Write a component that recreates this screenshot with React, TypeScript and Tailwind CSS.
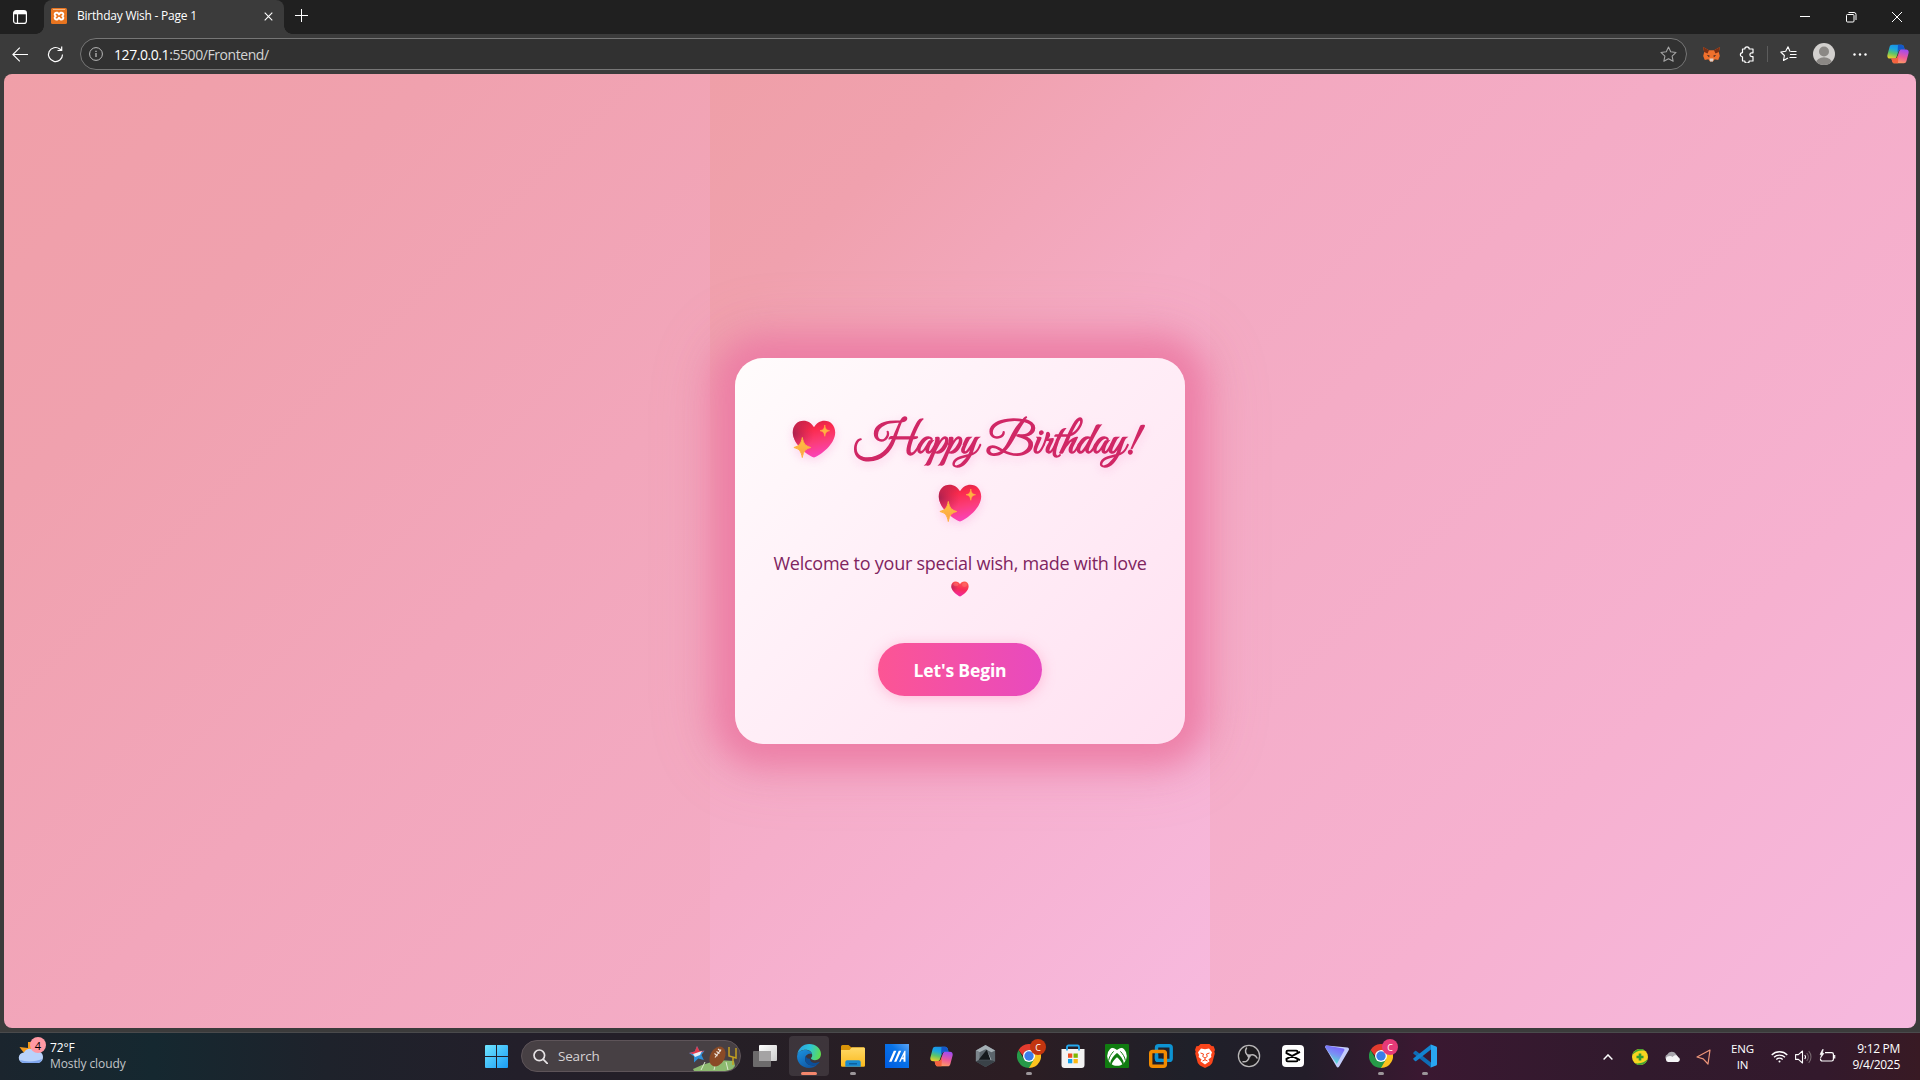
import React from 'react';

type IconProps = { className?: string };

function SparkHeart({ className = '' }: IconProps) {
  return (
    <svg viewBox="0 0 44 38" className={className}>
      <defs>
        <linearGradient id="sh" x1="0.3" y1="0" x2="0.55" y2="1">
          <stop offset="0" stopColor="#d32448" />
          <stop offset="0.25" stopColor="#fb2a4c" />
          <stop offset="0.6" stopColor="#fb3c78" />
          <stop offset="1" stopColor="#fb42bd" />
        </linearGradient>
        <radialGradient id="shl" cx="0" cy="0.35" r="0.5">
          <stop offset="0" stopColor="#9a1f50" stopOpacity="0.85" />
          <stop offset="1" stopColor="#c32450" stopOpacity="0" />
        </radialGradient>
        <linearGradient id="shs" x1="0" y1="0" x2="0" y2="1">
          <stop offset="0" stopColor="#ffc93c" />
          <stop offset="1" stopColor="#fb9d4b" />
        </linearGradient>
      </defs>
      <path d="M22 37.5C15 35 .8 24 .8 12.500C.8 5.500 5.500 .8 11.500 .8c4.500 0 8.500 2.700 10.500 6.500C24 3.500 28 .8 32.500 .8c6 0 10.700 4.700 10.700 11.700C43.200 24 29 35 22 37.500Z" fill="url(#sh)" />
      <path d="M22 37.5C15 35 .8 24 .8 12.500C.8 5.500 5.500 .8 11.500 .8c4.500 0 8.500 2.700 10.500 6.500C24 3.500 28 .8 32.500 .8c6 0 10.700 4.700 10.700 11.700C43.200 24 29 35 22 37.500Z" fill="url(#shl)" />
      <path d="M10.300 17.500c1.300 6.200 2.600 8.300 8.400 10-5.800 1.600-7.100 3.700-8.400 10-1.300-6.300-2.600-8.400-8.400-10 5.800-1.700 7.100-3.800 8.400-10Z" fill="url(#shs)" stroke="#ffb340" strokeWidth="1" strokeLinejoin="round" />
      <path d="M32.800 5c.6 4 1.500 5 4.800 5.700-3.300.8-4.200 1.800-4.800 5.600-.6-3.800-1.500-4.800-4.800-5.600 3.300-.7 4.200-1.700 4.800-5.700Z" fill="#ffb340" stroke="#ffb340" strokeWidth=".6" strokeLinejoin="round" />
    </svg>
  );
}

function SmallHeart() {
  return (
    <svg viewBox="0 0 44 38" className="h-4 w-[18px]">
      <defs>
        <linearGradient id="smh" x1="0.6" y1="0" x2="0.4" y2="1">
          <stop offset="0" stopColor="#ff5a4e" />
          <stop offset="0.5" stopColor="#f82c58" />
          <stop offset="1" stopColor="#f02aa8" />
        </linearGradient>
        <radialGradient id="smd" cx="0" cy="0.4" r="0.4">
          <stop offset="0" stopColor="#a32560" stopOpacity="0.8" />
          <stop offset="1" stopColor="#c32450" stopOpacity="0" />
        </radialGradient>
      </defs>
      <path d="M22 37.500C15 35 .8 24 .8 12.500C.8 5.500 5.500 .8 11.500 .8c4.500 0 8.500 2.700 10.500 6.500C24 3.500 28 .8 32.500 .8c6 0 10.700 4.700 10.700 11.700C43.200 24 29 35 22 37.500Z" fill="url(#smh)" />
      <path d="M22 37.500C15 35 .8 24 .8 12.500C.8 5.500 5.500 .8 11.500 .8c4.500 0 8.500 2.700 10.500 6.500C24 3.500 28 .8 32.500 .8c6 0 10.700 4.700 10.700 11.700C43.200 24 29 35 22 37.500Z" fill="url(#smd)" />
      <ellipse cx="12" cy="8" rx="6" ry="4" fill="#ff8a80" opacity=".35" />
      <ellipse cx="33" cy="9" rx="6" ry="5" fill="#ff8a80" opacity=".35" />
    </svg>
  );
}

function Copilot({ className = '' }: IconProps) {
  return (
    <svg viewBox="0 0 24 22" className={className}>
      <defs>
        <linearGradient id="cpA" x1="0.6" y1="0" x2="0.3" y2="1">
          <stop offset="0" stopColor="#1a8fe8" />
          <stop offset="0.35" stopColor="#1ca7e0" />
          <stop offset="0.65" stopColor="#5cc46a" />
          <stop offset="1" stopColor="#e8d02a" />
        </linearGradient>
        <linearGradient id="cpB" x1="0.6" y1="0" x2="0.3" y2="1">
          <stop offset="0" stopColor="#a24bf0" />
          <stop offset="0.5" stopColor="#ec5a9a" />
          <stop offset="1" stopColor="#ffa35c" />
        </linearGradient>
      </defs>
      <path d="M5.500 .7h10.300c1.500 0 2.300 1 2.700 2.300l.9 3h-4.600c-1.300 0-2 .7-2.300 1.800l-2.200 6.400c-.4 1.200-1.200 1.800-2.500 1.800H3.200C.6 16-.2 14 .5 11.500L2.700 3.200C3.200 1.600 4 .7 5.500 .7Z" fill="url(#cpA)" />
      <path d="M12 .7h3.800c1.500 0 2.300 1 2.700 2.300l.9 3h-4.600c-1.300 0-2 .7-2.300 1.800L11.500 9.500Z" fill="#1457c9" />
      <path d="M18.500 21.300H8.200c-1.500 0-2.200-1-2.600-2.300l-.9-3h4c1.300 0 2.200-.7 2.600-1.800l2.200-6.400c.4-1.200 1.200-1.800 2.500-1.800h4.800c2.600 0 3.400 2 2.700 4.500l-2.200 8.300c-.5 1.600-1.300 2.500-2.800 2.500Z" fill="url(#cpB)" />
      <path d="M12 21.300H8.200c-1.500 0-2.200-1-2.600-2.300l-.9-3h4c1.300 0 2.200-.7 2.600-1.800l1.200-3.200Z" fill="#f4623e" />
    </svg>
  );
}

function Chrome({ letter, badge }: { letter: string; badge: string }) {
  return (
    <div className="relative">
      <svg viewBox="0 0 24 24" className="h-6 w-6">
        <path d="M12 12V6h10.400A12 12 0 0 1 12 24Z" fill="#fcc31e" />
        <path d="M1.600 6 6.800 15 12 12l5.200 3L12 24A12 12 0 0 1 1.600 6Z" fill="#269a48" />
        <path d="M1.600 6A12 12 0 0 1 22.400 6H12c-3 0-5 1.500-5.800 6Z" fill="#e33b2e" />
        <circle cx="12" cy="12" r="6" fill="#fff" />
        <circle cx="12" cy="12" r="4.700" fill="#3b7de9" />
      </svg>
      <div className={`absolute -top-[5px] left-[13px] flex h-4 w-4 items-center justify-center rounded-full text-[9px] leading-none text-white ${badge}`}>{letter}</div>
    </div>
  );
}

const glyphs: Record<string, React.ReactNode> = {
  start: (
    <svg viewBox="0 0 23 23" className="h-[23px] w-[23px]">
      <defs>
        <linearGradient id="win" x1="0" y1="0" x2="1" y2="1">
          <stop offset="0" stopColor="#6fe5ff" />
          <stop offset="1" stopColor="#1a9cf5" />
        </linearGradient>
      </defs>
      <path d="M1 0h10v11H0V1a1 1 0 0 1 1-1ZM12 0h10a1 1 0 0 1 1 1v10H12ZM0 12h11v11H1a1 1 0 0 1-1-1ZM12 12h11v10a1 1 0 0 1-1 1H12Z" fill="url(#win)" />
    </svg>
  ),
  taskview: (
    <svg viewBox="0 0 24 22" className="h-[22px] w-6">
      <defs>
        <linearGradient id="tv" x1="0" y1="0" x2="1" y2="1">
          <stop offset="0" stopColor="#fff" />
          <stop offset="1" stopColor="#ccc" />
        </linearGradient>
      </defs>
      <rect x="6" y="0" width="18" height="16" rx="1" fill="url(#tv)" />
      <rect x="0" y="6" width="18" height="16" rx="1" fill="#6d6b6c" />
      <path d="M6 6h12v10H6z" fill="#a5a3a4" />
    </svg>
  ),
  edge: (
    <svg viewBox="0 0 24 24" className="h-6 w-6">
      <defs>
        <linearGradient id="eg" x1="0" y1="0.3" x2="1" y2="0.5">
          <stop offset="0" stopColor="#2b9fe0" />
          <stop offset="0.5" stopColor="#2cc4d8" />
          <stop offset="1" stopColor="#5fdc50" />
        </linearGradient>
        <linearGradient id="eb" x1="0" y1="0" x2="0.6" y2="1">
          <stop offset="0" stopColor="#1b93e0" />
          <stop offset="1" stopColor="#0f58a6" />
        </linearGradient>
      </defs>
      <path d="M.2 11C1 4.500 6 0 12.200 0 19 0 24 4.600 24 10c0 3.800-2.800 6.200-6 6.200-2.400 0-4-.9-4-1.900 0-.7 1.200-1 1.200-3C15.200 8 12 5.800 8.800 5.800 4.700 5.800 1.200 8 .2 11Z" fill="url(#eg)" />
      <path d="M.1 12C.5 8 4 5.900 8.300 5.900c3.500 0 6.300 2 6.800 4.400-4-1.600-7 1.200-7 4.700 0 5 5.500 8 11.900 5.700C17.800 23 15 24 12 24 5 24-.4 18.500.1 12Z" fill="url(#eb)" />
      <path d="M8.900 11.800c-.6 1-.8 2-.8 3.200 0 5 5.500 8 11.900 5.700 1-.6 2-1.700 2.700-2.900-4 2-9.500 1.400-9.800-3.100-2 .3-3.900-.9-4-2.900Z" fill="#0c4f99" />
    </svg>
  ),
  explorer: (
    <svg viewBox="0 0 24 22" className="h-[22px] w-6">
      <defs>
        <linearGradient id="fo" x1="0" y1="0" x2="0" y2="1">
          <stop offset="0" stopColor="#ffd967" />
          <stop offset="1" stopColor="#fbb91d" />
        </linearGradient>
      </defs>
      <path d="M0 1.500A1.500 1.500 0 0 1 1.500 0h6l2.700 2.200H23V8H0Z" fill="#d99409" />
      <path d="M0 5h8.500l2.200-2.600H23a1 1 0 0 1 1 1V20.500a1.200 1.200 0 0 1-1.200 1.200H1.200A1.200 1.200 0 0 1 0 20.500Z" fill="url(#fo)" />
      <path d="M4.300 21.700V17a1.800 1.800 0 0 1 1.800-1.800h11.800a1.800 1.800 0 0 1 1.800 1.800v4.700Z" fill="#188ad1" />
      <path d="M8 18h8v1.500H8z" fill="#0d619e" />
    </svg>
  ),
  myasus: (
    <svg viewBox="0 0 24 24" className="h-6 w-6">
      <defs>
        <linearGradient id="ma" x1="0" y1="1" x2="1" y2="0">
          <stop offset="0" stopColor="#005be0" />
          <stop offset="0.6" stopColor="#0873e8" />
          <stop offset="1" stopColor="#5ba4f4" />
        </linearGradient>
      </defs>
      <path d="M0 0h24v24H0Z" fill="url(#ma)" />
      <path d="m4 17.800 4.800-11h2.600l-4.800 11ZM9 17.800l4.800-11h2.400l-4.800 11Z" fill="#fff" />
      <path d="m14 17.800 5.500-11h1v11h-2v-2.600h-1.800l-1 2.600ZM17.400 13.500h1.100v-2.400Z" fill="#fff" fillRule="evenodd" />
    </svg>
  ),
  copilot: <Copilot className="h-[21px] w-[23px]" />,
  armoury: (
    <svg viewBox="0 0 22 24" className="h-[22px] w-[21px]">
      <path d="M11 0 21.500 6v12L11 24 .5 18V6Z" fill="#5b646b" />
      <path d="M11 0 21.500 6l-4 2L11 4.500 4.500 8l-4-2Z" fill="#a5afb5" />
      <path d="M.5 6l4 2v8l-4 2Z" fill="#7b848b" />
      <path d="m12.500 5 4 11L3.500 16Z" fill="#15191d" />
      <path d="m12.500 5 5.500 12.500-1.500-1.500Z" fill="#b3bcc2" />
      <path d="M.5 18 11 24l10.500-6-4-1.500H3.500Z" fill="#3a4248" />
    </svg>
  ),
  chrome: <Chrome letter="C" badge="bg-[#c2350f]" />,
  store: (
    <svg viewBox="0 0 24 24" className="h-6 w-6">
      <path d="M.5 5h23v16a3 3 0 0 1-3 3h-17a3 3 0 0 1-3-3Z" fill="#f3f3f3" />
      <path d="M6 6.500V3a1.500 1.500 0 0 1 1.500-1.500h9A1.500 1.500 0 0 1 18 3v3.500" fill="none" stroke="#24a8ee" strokeWidth="1.800" />
      <path d="M7 9.500h4.300v4.300H7z" fill="#ef4f22" />
      <path d="M12.500 9.500h4.300v4.300h-4.300z" fill="#7db700" />
      <path d="M7 15h4.300v4.300H7z" fill="#0ea2ee" />
      <path d="M12.500 15h4.300v4.300h-4.300z" fill="#fdb811" />
    </svg>
  ),
  xbox: (
    <svg viewBox="0 0 24 24" className="h-6 w-6">
      <rect width="24" height="24" rx="1" fill="#107c10" />
      <circle cx="12" cy="12" r="9.800" fill="#fff" />
      <path d="M5.500 3.800C8 3.300 10.500 4.800 12 5.900c1.500-1.100 4-2.600 6.500-2.100C16.500 1.900 14 1.500 12 1.500s-4.500.4-6.500 2.300Z" fill="#107c10" />
      <path d="M12 9c-3.400 2.500-6.500 7-6.800 10.200C7 21 9.500 22 12 22s5-1 6.800-2.800C18.500 16 15.400 11.500 12 9Z" fill="#107c10" />
      <path d="M12 13.200c-2.300 1.900-4.300 4.300-5.300 7.100C8.200 21.300 10 21.800 12 21.800s3.800-.5 5.300-1.500c-1-2.800-3-5.200-5.300-7.100Z" fill="#fff" />
      <path d="M8.600 7.400C6.300 9.700 4.200 13 3.600 16.500M15.400 7.400c2.300 2.300 4.400 5.600 5 9.100" fill="none" stroke="#107c10" strokeWidth="1" />
    </svg>
  ),
  vmware: (
    <svg viewBox="0 0 24 24" className="h-6 w-6" fill="none" strokeWidth="3.400">
      <rect x="7.500" y="1.700" width="14.700" height="14.700" rx="2" stroke="#0d93d2" />
      <rect x="1.700" y="7.500" width="14.700" height="14.700" rx="2" stroke="#f38b00" />
      <path d="M7.500 11v3.400a2 2 0 0 0 2 2H13" stroke="#0d93d2" />
    </svg>
  ),
  brave: (
    <svg viewBox="0 0 20 24" className="h-6 w-5">
      <path d="m5.500 0h9l2 2 2.200.3L20 6l-.7 1.500.5 2-2.600 9.500-2.200 2.500L10 24l-5-2.500L2.800 19 .2 9.500l.5-2L0 6l1.300-3.700L3.500 2Z" fill="#f9451b" />
      <path d="m6 4.500 4 .8 4-.8 3 3.800-1 2.700.4 2-3 2.500 1.200 1.700L10 20.500l-4.600-3.300 1.200-1.700-3-2.500.4-2-1-2.700Z" fill="#fff" />
      <path d="m5.500 9 3 1-.8 2.500L10 14l2.300-1.500-.8-2.500 3-1M10 14v2M7.500 17l2.500-1.200 2.500 1.200" fill="none" stroke="#f9451b" strokeWidth="1" />
    </svg>
  ),
  obs: (
    <svg viewBox="0 0 24 24" className="h-6 w-6">
      <circle cx="12" cy="12" r="10.600" fill="#1d1b1e" stroke="#b9b7b8" strokeWidth="1.300" />
      <g fill="none" stroke="#b9b7b8" strokeWidth="1.500" strokeLinecap="round">
        <path d="M12 12C8.500 10.500 7.500 7 9.500 4" />
        <path d="M12 12c3.200-2.200 6.800-1 8 2" />
        <path d="M12 12c.3 3.800-2.400 6.200-6 5.800" />
      </g>
      <circle cx="12" cy="12" r="1.800" fill="#b9b7b8" />
    </svg>
  ),
  capcut: (
    <svg viewBox="0 0 22 22" className="h-[22px] w-[22px]">
      <rect width="22" height="22" rx="4" fill="#fff" />
      <path d="M18 6.800 4.500 13.800v1.400c0 .7.500 1.200 1.200 1.200h8.600c.7 0 1.200-.5 1.200-1.200v-1M18 15.200 4.500 8.200V6.800c0-.7.500-1.200 1.200-1.200h8.600c.7 0 1.200.5 1.200 1.200v1" fill="none" stroke="#000" strokeWidth="1.900" />
    </svg>
  ),
  proton: (
    <svg viewBox="0 0 24 23" className="h-[23px] w-6">
      <defs>
        <linearGradient id="pv" x1="0.8" y1="0" x2="0.4" y2="1">
          <stop offset="0" stopColor="#7a5bff" />
          <stop offset="0.5" stopColor="#7b8ff4" />
          <stop offset="1" stopColor="#4cf0c8" />
        </linearGradient>
      </defs>
      <path d="M.3 2.600C-.2 1.500.6.300 1.800.5L22.500 2.500c1.200.1 1.900 1.400 1.300 2.400L14 21.700c-.6 1-2 1-2.500-.1Z" fill="#c3cdfb" />
      <path d="M.3 2.600C-.2 1.500.6.300 1.800.5l16.400 3c1.200.2 1.500 1.200 1 2.100L11.800 19Z" fill="url(#pv)" />
    </svg>
  ),
  chrome2: <Chrome letter="C" badge="bg-[#e53a78]" />,
  vscode: (
    <svg viewBox="0 0 24 24" className="h-6 w-6">
      <path d="M.5 8.500 2 7.100a1 1 0 0 1 1.300 0L18 18.500V23.500L.5 9.800a.9.900 0 0 1 0-1.300Z" fill="#0f6cb5" />
      <path d="M.5 15.500 2 16.900a1 1 0 0 0 1.300 0L18 5.500V.5L.5 14.200a.9.900 0 0 0 0 1.300Z" fill="#1283cf" />
      <path d="M17.300.2 23.200 2.600c.5.200.8.700.8 1.200v16.400c0 .5-.3 1-.8 1.200l-5.900 2.400c-.4.200.7-.2.700-1.300V1.500c0-1.100-1.100-1.500-.7-1.300Z" fill="#29a6f2" />
    </svg>
  ),
};

const pinned: { id: string; mark?: 'active' | 'open' }[] = [
  { id: 'taskview' },
  { id: 'edge', mark: 'active' },
  { id: 'explorer', mark: 'open' },
  { id: 'myasus' },
  { id: 'copilot' },
  { id: 'armoury' },
  { id: 'chrome', mark: 'open' },
  { id: 'store' },
  { id: 'xbox' },
  { id: 'vmware' },
  { id: 'brave' },
  { id: 'obs' },
  { id: 'capcut' },
  { id: 'proton' },
  { id: 'chrome2', mark: 'open' },
  { id: 'vscode', mark: 'open' },
];

function TitleBar() {
  return (
    <div className="flex h-[34px] shrink-0 bg-[#202020] text-white">
      <div className="flex w-11 items-center pl-[13px]">
        <svg viewBox="0 0 14 14" width="14" height="14">
          <rect x=".6" y=".6" width="12.800" height="12.800" rx="2.500" fill="none" stroke="#fff" strokeWidth="1.200" />
          <path d="M1 1h12v3.300H1Z" fill="#fff" />
          <path d="M4.500 4v9" stroke="#fff" strokeWidth="1.200" />
        </svg>
      </div>
      <div className="relative flex w-60 items-center rounded-t-lg bg-[#3b3b3b] pb-0.5 pl-[7px] pr-[11px]">
        <div className="absolute bottom-0 -left-2 h-2 w-2 bg-[radial-gradient(circle_at_0_0,#202020_7.500px,#3b3b3b_8px)]" />
        <div className="absolute -right-2 bottom-0 h-2 w-2 bg-[radial-gradient(circle_at_100%_0,#202020_7.500px,#3b3b3b_8px)]" />
        <svg viewBox="0 0 16 16" width="16" height="16">
          <rect width="16" height="16" rx="1.500" fill="#e8741f" />
          <path d="M2 1.500h12" stroke="#f6b27c" strokeWidth="1" />
          <path d="M8 6.500 6.500 4.700H5.200a1.600 1.600 0 0 0-1 2.800l.6.600-.6.600a1.600 1.600 0 0 0 1 2.800h1.300L8 9.700l1.500 1.800h1.300a1.600 1.600 0 0 0 1-2.800l-.6-.6.6-.6a1.600 1.600 0 0 0-1-2.800H9.500Z" fill="none" stroke="#fff" strokeWidth="1.900" strokeLinejoin="round" />
        </svg>
        <span className="ml-2.5 flex-1 text-[12px] tracking-[-0.23px]">Birthday Wish - Page 1</span>
        <svg viewBox="0 0 9 9" width="9" height="9" className="mt-px">
          <path d="m.7.700 7.600 7.600M8.300.7.700 8.300" stroke="#fff" strokeWidth="1.100" />
        </svg>
      </div>
      <div className="flex items-center pb-[3px] pl-[11px]">
        <svg viewBox="0 0 13 13" width="13" height="13">
          <path d="M6.500 0v13M0 6.500h13" stroke="#fff" strokeWidth="1" />
        </svg>
      </div>
      <div className="ml-auto flex items-center gap-9 pr-[18px]">
        <svg viewBox="0 0 10 10" width="10" height="10">
          <path d="M0 4.500h10" stroke="#fff" />
        </svg>
        <svg viewBox="0 0 10 10" width="10" height="10" fill="none" stroke="#fff" className="overflow-visible">
          <rect x=".5" y="2.500" width="7.500" height="7.500" rx="1" />
          <path d="M2.500.5H8a2 2 0 0 1 2 2v5.500" />
        </svg>
        <svg viewBox="0 0 10 10" width="10" height="10" stroke="#fff">
          <path d="m0 0 10 10M10 0 0 10" />
        </svg>
      </div>
    </div>
  );
}

function AddressBar() {
  return (
    <div className="flex h-10 shrink-0 items-center bg-[#3b3b3b]">
      <svg viewBox="0 0 16 15" width="16" height="15" fill="none" stroke="#fff" strokeWidth="1.100" className="ml-3">
        <path d="M16 7.500H.8M7.800.7.900 7.500l6.900 6.800" />
      </svg>
      <svg viewBox="0 0 17 17" width="17" height="17" fill="none" stroke="#fff" strokeWidth="1.200" className="ml-[19px]">
        <path d="M15.500 8.500A7 7 0 1 1 12.800 3M10.500 4.500h4.200V.5M14.500 4.300 12.500 2.700" />
      </svg>
      <div className="ml-4 flex h-8 w-[1607px] items-center rounded-full border border-[#767676] bg-[#313131] pl-2 pr-[9px]">
        <svg viewBox="0 0 14 14" width="14" height="14" fill="none" stroke="#b9b9b9">
          <circle cx="7" cy="7" r="6.400" />
          <path d="M7 6v4M7 3.800v1.300" strokeWidth="1.300" />
        </svg>
        <span className="ml-[11px] flex-1 text-[14px] tracking-[-0.43px] text-[#d4d4d4]">
          <span className="text-white">127.0.0.1</span>:5500/Frontend/
        </span>
        <svg viewBox="0 0 16 16" width="17" height="17" fill="none" stroke="#a5a5a5" strokeLinejoin="round">
          <path d="m8 1 2.100 4.500 5 .6-3.700 3.400 1 4.900L8 12l-4.400 2.400 1-4.900L.9 6.100l5-.6Z" />
        </svg>
      </div>
      <svg viewBox="0 0 17 15" width="17" height="15" className="ml-4">
        <path d="M0 0 6 3.200h5L17 0l-1.200 5 1 4-1.600 4-3.500-.8L10 14.500H7L5.300 12.200 1.800 13 .2 9l1-4Z" fill="#f0702c" />
        <path d="M0 0 6 3.200 4.500 6.500 1.200 5ZM17 0l-6 3.200 1.500 3.300L15.800 5Z" fill="#7c2f14" />
        <path d="M6.500 11.500h4L10 14.500H7Z" fill="#dcd0ca" />
        <path d="m3.800 8 2.800.5-.5 1.700ZM13.200 8l-2.800.5.500 1.700Z" fill="#3a2a25" />
      </svg>
      <svg viewBox="0 0 16 17" width="16" height="17" fill="none" stroke="#fff" strokeWidth="1.200" strokeLinejoin="round" className="ml-[19px]">
        <path d="M3.500 3h2.300a2.200 2.200 0 0 1 4.400 0H14v3.800H12.800a1.900 1.900 0 0 0 0 3.800H14v4.400H10.200a2.200 2.200 0 0 1-4.400 0H3.500V10.800a2.100 2.100 0 0 1 0-4.200Z" />
      </svg>
      <div className="ml-3 h-4 w-px bg-[#5c5c5c]" />
      <svg viewBox="0 0 17 16" width="17" height="16" fill="none" stroke="#fff" strokeWidth="1.100" strokeLinejoin="round" className="ml-3">
        <path d="M10 5.500 8 .8 5.700 5.300.8 6l3.600 3.500-.9 5L8 12M10.500 5.500h6M10 8.500h6.500M9.500 11.500h7" />
      </svg>
      <svg viewBox="0 0 22 22" width="22" height="22" className="ml-4">
        <defs>
          <clipPath id="avatar">
            <circle cx="11" cy="11" r="11" />
          </clipPath>
        </defs>
        <circle cx="11" cy="11" r="11" fill="#d2d0ce" />
        <circle cx="11" cy="8.500" r="5" fill="#8b8885" />
        <ellipse cx="11" cy="20" rx="8" ry="5.800" fill="#8b8885" clipPath="url(#avatar)" />
      </svg>
      <svg viewBox="0 0 14 3" width="14" height="3" fill="#fff" className="ml-[18px]">
        <circle cx="1.500" cy="1.500" r="1.200" />
        <circle cx="7" cy="1.500" r="1.200" />
        <circle cx="12.500" cy="1.500" r="1.200" />
      </svg>
      <Copilot className="ml-5 h-5 w-[22px]" />
    </div>
  );
}

function WishCard() {
  return (
    <div className="flex h-[386px] w-[450px] flex-col items-center rounded-[28px] bg-[linear-gradient(135deg,#fffcfc_0%,#fff0f8_40%,#ffe0f1_100%)] pt-[49px] shadow-[0_0_32px_22px_rgba(236,122,163,0.88),0_0_60px_24px_rgba(238,127,168,0.25)]">
      <h1 className="flex w-full flex-wrap items-center justify-center [filter:drop-shadow(0_3px_5px_rgba(245,140,210,0.35))]">
        <span className="flex h-16 w-full items-center pl-[57px]">
          <SparkHeart className="h-[38px] w-11" />
          <span className="ml-[19px] whitespace-nowrap pt-[9px] font-['Great_Vibes','Liberation_Serif',serif] text-[44px] font-bold leading-none text-[#d02765]">Happy Birthday!</span>
        </span>
        <span className="flex h-16 items-center justify-center">
          <SparkHeart className="h-[38px] w-11" />
        </span>
      </h1>
      <p className="mt-[15px] flex flex-col items-center text-[18px] leading-[26px] tracking-[-0.25px] text-[#80245f]">
        <span className="whitespace-nowrap">Welcome to your special wish, made with love</span>
        <span className="flex h-[26px] items-center"><SmallHeart /></span>
      </p>
      <button className="mt-[41px] h-[53px] w-[164px] rounded-full bg-[linear-gradient(90deg,#fc5594,#e84abf)] pt-0.5 text-[17.5px] font-bold tracking-[-0.15px] text-white shadow-[0_2px_14px_rgba(255,100,160,0.35)]">Let's Begin</button>
    </div>
  );
}

function SearchBox() {
  return (
    <div className="ml-[3px] mr-0.5 mt-[7px] flex h-8 w-[220px] items-center self-start overflow-hidden rounded-full border border-[#5e5459] bg-[#474044] pl-[11px]">
      <svg viewBox="0 0 15 15" width="15" height="15" fill="none" stroke="#e6e2e4" strokeWidth="1.700" strokeLinecap="round">
        <circle cx="6.300" cy="6.300" r="5.300" />
        <path d="m10.300 10.300 3.900 4" />
      </svg>
      <span className="ml-2.5 flex-1 text-[13.5px] tracking-[-0.2px] text-[#d6d2d4]">Search</span>
      <svg viewBox="0 0 52 30" width="52" height="30">
        <path d="M5 28 14 24 30 19 46 20l1 5-4 5H6Z" fill="#8dba70" />
        <path d="M17 21 13 29M28 21l-2 8M38 21l2 8" stroke="#dcebcd" />
        <path d="m9 5 2.500 5 5-.3-3 4.300 2.300 5-5.500-1.500L6 21.500v-6L1 12l5.800-1.600Z" fill="#2f8fd8" />
        <path d="m9 5 2.500 5 5-.3-8 4.300L1 12l5.800-1.600Z" fill="#e23a4c" />
        <path d="m5 13 9-3-2 4-5 2Z" fill="#e8eef5" />
        <ellipse cx="29.500" cy="15.500" rx="7.300" ry="10.500" transform="rotate(28 29.500 15.500)" fill="#8a4a26" />
        <path d="m27 16.500 6-8M26.500 12.500l3 2.500M28.500 10.500l3 2M30 8l3 2.300" stroke="#f0e6df" strokeWidth="1.100" />
        <path d="M41 6v9l7 2V7M45 16.500V24" fill="none" stroke="#c4a01e" strokeWidth="1.500" />
      </svg>
    </div>
  );
}

function Tray() {
  return (
    <div className="ml-auto flex items-center pr-5 text-[12px] text-white">
      <svg viewBox="0 0 10 6" width="10" height="6" fill="none" stroke="#fff" strokeWidth="1.400">
        <path d="m.6 5.400 4.400-4.500 4.400 4.500" />
      </svg>
      <svg viewBox="0 0 16 16" width="16" height="16" className="ml-[19px]">
        <circle cx="8" cy="8" r="8" fill="#f7d51f" />
        <path d="M.3 6A8 8 0 0 1 13 1.700C7 1 3 3 .3 6ZM15.700 10A8 8 0 0 1 3 14.300C9 15 13 13 15.700 10Z" fill="#3fa535" />
        <path d="M8 4.500v7M4.500 8h7" stroke="#2d9a35" strokeWidth="2.600" />
      </svg>
      <svg viewBox="0 0 17 11" width="17" height="11" className="ml-4">
        <path d="M3 9a3 3 0 0 1 .3-5.500A5 5 0 0 1 12 3l2 4Z" fill="#a9a6ad" />
        <path d="M4 11a3 3 0 0 1-.5-5.500C6 4.500 7.500 5 8.500 6c2-2.500 5-2 5.500 0A2.600 2.600 0 0 1 14 11Z" fill="#f5f4f6" />
      </svg>
      <svg viewBox="0 0 15 16" width="15" height="16" fill="none" stroke="#ee9579" strokeWidth="1.200" strokeLinejoin="round" className="ml-[15px]">
        <path d="M14 1 1 8l6.200 1.800 4.800 5.200Z" />
      </svg>
      <div className="ml-[19px] w-[24px] text-center text-[11.5px] leading-4 tracking-[-0.25px]">
        <div>ENG</div>
        <div>IN</div>
      </div>
      <svg viewBox="0 0 17 13" width="17" height="13" fill="none" stroke="#fff" strokeWidth="1.300" className="ml-[17px]">
        <path d="M.7 5a11 11 0 0 1 15.600 0M3 7.300a7.800 7.800 0 0 1 11 0M5.300 9.500a4.600 4.600 0 0 1 6.400 0" />
        <circle cx="8.500" cy="11.500" r="1" fill="#fff" stroke="none" />
      </svg>
      <svg viewBox="0 0 17 14" width="17" height="14" fill="none" stroke="#fff" strokeWidth="1.100" strokeLinejoin="round" className="ml-[7px]">
        <path d="M.6 4.600h2.800L7.500 1v12L3.400 9.400H.6Z" />
        <path d="M9.700 5a3 3 0 0 1 0 4" />
        <path d="M11.700 3a6 6 0 0 1 0 8M13.700 1.200a8.500 8.500 0 0 1 0 11.600" stroke="#77686f" />
      </svg>
      <svg viewBox="0 0 17 13" width="17" height="13" fill="none" stroke="#fff" strokeWidth="1.200" className="ml-[7px] overflow-visible">
        <path d="M6 2.600h6.700c1 0 1.700.7 1.700 1.700v5c0 1-.7 1.700-1.700 1.700H3.200c-1 0-1.700-.7-1.700-1.700V8.500M15.700 5v3.500" />
        <path d="M3.500-.5 1 4.500h1.500L1.500 8 5 3.300H3.300L4.300-.5Z" fill="#fff" strokeWidth=".6" />
      </svg>
      <div className="ml-4 text-right leading-4 tracking-[-0.3px]">
        <div>9:12 PM</div>
        <div>9/4/2025</div>
      </div>
    </div>
  );
}

function Taskbar() {
  return (
    <div className="flex h-12 shrink-0 items-stretch border-t border-[#4a4a4c] bg-[linear-gradient(90deg,#1b252e_0%,#152830_8%,#1e222b_17%,#231f2a_27%,#251f26_38%,#2c1d23_53%,#1f2029_62%,#231d29_68%,#3a1831_74%,#311a2d_85%,#33192c_95%,#381a24_100%)]">
      <div className="flex w-[474px] pl-[18px] pt-[5px]">
        <div className="relative h-8 w-8">
          <svg viewBox="0 0 28 28" width="28" height="28">
            <path d="M10 4v6L1.500 9l4.500 6h9V4Z" fill="#f59b1d" />
            <path d="M6 25a5.200 5.200 0 0 1 0-10.500C7.500 10.500 14 9 17 13.500c5-1 8 2 8 5.500S22.500 25 19.500 25Z" fill="#b9d2fb" />
            <path d="M2 22c5 2 16 2 22-1-.6 3-2.500 4-4.500 4H6c-1.500 0-3-1-4-3Z" fill="#7fa6ee" />
          </svg>
          <div className="absolute -top-px left-3 flex h-4 w-4 items-center justify-center rounded-full bg-[#ff99a4] text-[11px] leading-none text-black">4</div>
        </div>
        <div className="pt-0.5 text-[12px] leading-4 tracking-[-0.1px]">
          <div className="text-white">72°F</div>
          <div className="text-[#c2c5c8]">Mostly cloudy</div>
        </div>
      </div>
      <div className="flex w-11 items-center justify-center">{glyphs.start}</div>
      <SearchBox />
      {pinned.map(({ id, mark }) => (
        <div key={id} className="flex w-11 justify-center pt-[3px]">
          <div className={`relative flex h-10 w-10 items-center justify-center rounded ${mark === 'active' ? 'bg-white/10' : ''}`}>
            {glyphs[id]}
            {mark === 'active' && <div className="absolute bottom-px h-[3px] w-4 rounded-full bg-[#f4866c]" />}
            {mark === 'open' && <div className="absolute bottom-px h-[3px] w-1.5 rounded-full bg-[#9c969a]" />}
          </div>
        </div>
      ))}
      <Tray />
    </div>
  );
}

export default function App() {
  return (
    <div className="flex h-screen w-screen flex-col overflow-hidden bg-[#3b3b3b] font-['Open_Sans',sans-serif]">
      <TitleBar />
      <AddressBar />
      <main className="mx-1 mb-1 flex min-h-0 flex-1 justify-center overflow-hidden rounded-lg bg-[linear-gradient(135deg,#f09fa8_0%,#f0a1ae_15%,#f2a6bb_35%,#f4acc6_58%,#f6b1d0_80%,#f6b9df_100%)]">
        <div className="flex w-[500px] items-center justify-center bg-[linear-gradient(135deg,#ef9fa8_0%,#f0a1ae_18%,#f4abc4_45%,#f6b1d0_70%,#f7badf_100%)]">
          <WishCard />
        </div>
      </main>
      <Taskbar />
    </div>
  );
}
